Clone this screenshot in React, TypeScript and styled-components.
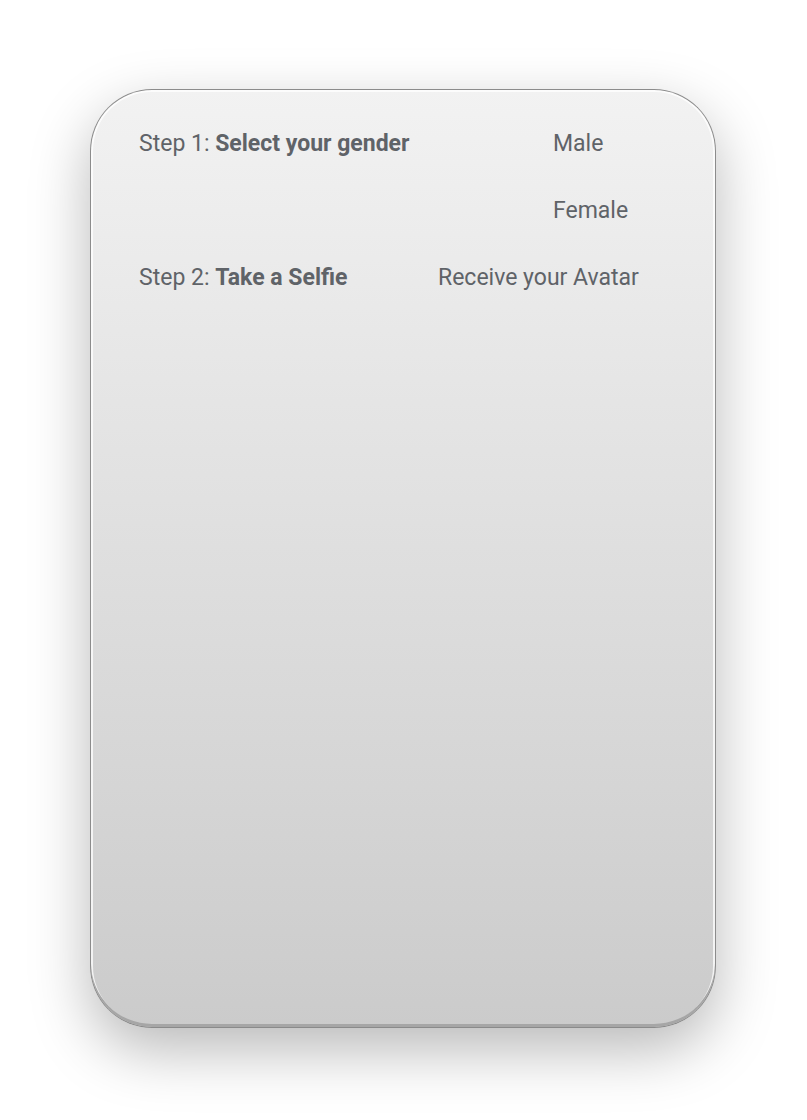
import React from "react";
import styled, { createGlobalStyle } from "styled-components";

const Global = createGlobalStyle`
  html, body { margin: 0; padding: 0; background: #ffffff; }
  body { font-family: Roboto, "Liberation Sans", sans-serif; }
`;

const Page = styled.div`
  width: 807px;
  height: 1120px;
  padding: 89px 0 0 90px;
  box-sizing: border-box;
`;

const Card = styled.div`
  width: 626px;
  height: 939px;
  box-sizing: border-box;
  border-radius: 62px;
  border: 1px solid #8c8c8c;
  border-bottom-color: #8a8a8a;
  background: linear-gradient(180deg, #f2f2f2 0%, #cbcbcb 100%);
  box-shadow:
    inset 0 -3px 0 #a6a6a6,
    inset 0 0 0 2px rgba(255, 255, 255, 0.75),
    0 22px 60px rgba(0, 0, 0, 0.28);
  padding: 20px 0 0 48px;
`;

const Grid = styled.div`
  display: grid;
  grid-template-columns: 299px 1fr;
  grid-auto-rows: 67px;
  align-items: center;
`;

const Label = styled.div<{ $indent?: number }>`
  font-size: 23px;
  color: #5f6368;
  white-space: nowrap;
  padding-left: ${(p) => p.$indent ?? 0}px;
  grid-column: ${(p) => (p.$indent !== undefined ? 2 : 1)};
`;

const Strong = styled.b`
  font-weight: 700;
`;

export default function App() {
  return (
    <>
      <Global />
      <Page>
        <Card>
          <Grid>
            <Label>
              Step 1: <Strong>Select your gender</Strong>
            </Label>
            <Label $indent={115}>Male</Label>
            <Label $indent={115}>Female</Label>
            <Label>
              Step 2: <Strong>Take a Selfie</Strong>
            </Label>
            <Label $indent={0}>Receive your Avatar</Label>
          </Grid>
        </Card>
      </Page>
    </>
  );
}
